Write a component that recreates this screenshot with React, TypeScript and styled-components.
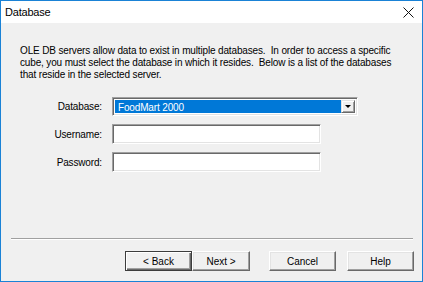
import styled, { createGlobalStyle } from "styled-components";

const GlobalStyle = createGlobalStyle`
  html, body {
    margin: 0;
    padding: 0;
    background: #ffffff;
  }
  * {
    box-sizing: border-box;
  }
`;

const Window = styled.div`
  width: 423px;
  height: 282px;
  border: 1px solid #1a82d6;
  display: flex;
  flex-direction: column;
  font-family: "Liberation Sans", Arial, sans-serif;
  font-size: 10px;
  letter-spacing: -0.15px;
  color: #000;
`;

const TitleBar = styled.div`
  height: 22px;
  flex: none;
  background: #ffffff;
  display: flex;
  align-items: center;
  padding: 0 8px 0 4px;
`;

const Title = styled.span`
  flex: 1;
  font-size: 11px;
  letter-spacing: -0.2px;
  color: #000;
`;

const CloseIcon = styled.svg`
  width: 11px;
  height: 11px;
  display: block;
`;

const Body = styled.div`
  flex: 1;
  background: #f0f0f0;
  display: flex;
  flex-direction: column;
`;

const Intro = styled.p`
  margin: 22px 0 0 19px;
  line-height: 12px;
  white-space: pre;
`;

const Form = styled.div`
  display: grid;
  grid-template-columns: 82px auto;
  grid-template-rows: 19px 20px 20px;
  column-gap: 10px;
  row-gap: 8px;
  margin: 16px 0 0 19px;
  align-items: center;
`;

const Label = styled.label`
  text-align: right;
`;

const sunken = `
  border-style: solid;
  border-width: 1px;
  border-color: #a0a0a0 #ffffff #ffffff #a0a0a0;
  box-shadow: inset 1px 1px #696969, inset -1px -1px #e3e3e3;
`;

const TextBox = styled.div`
  ${sunken}
  width: 209px;
  height: 20px;
  background: #ffffff;
`;

const Select = styled.div`
  ${sunken}
  width: 246px;
  height: 19px;
  background: #ffffff;
  display: flex;
  padding: 2px;
`;

const Selected = styled.div`
  flex: 1;
  background: #0078d7;
  color: #ffffff;
  padding-left: 3px;
  line-height: 15px;
`;

const DropButton = styled.div`
  width: 14px;
  background: #f0f0f0;
  border-style: solid;
  border-width: 1px;
  border-color: #e3e3e3 #696969 #696969 #e3e3e3;
  box-shadow: inset 1px 1px #ffffff, inset -1px -1px #a0a0a0;
  display: flex;
  align-items: center;
  justify-content: center;
`;

const Arrow = styled.span`
  width: 0;
  height: 0;
  border-left: 3px solid transparent;
  border-right: 3px solid transparent;
  border-top: 3px solid #000;
`;

const Separator = styled.div`
  margin: auto 9px 0 10px;
  height: 2px;
  border-top: 1px solid #a0a0a0;
  border-bottom: 1px solid #ffffff;
`;

const ButtonRow = styled.div`
  display: flex;
  justify-content: flex-end;
  padding: 11px 8px 10px 0;
`;

const Button = styled.button<{ $default?: boolean; $w?: number; $gap?: number }>`
  width: ${({ $w }) => $w ?? 67}px;
  height: 20px;
  margin-left: ${({ $gap }) => $gap ?? 0}px;
  padding: 0;
  font: inherit;
  color: #000;
  background: #f0f0f0;
  border-style: solid;
  border-width: 1px;
  border-color: ${({ $default }) =>
    $default ? "#3c3c3c" : "#ffffff #696969 #696969 #ffffff"};
  box-shadow: ${({ $default }) =>
    $default
      ? "inset 1px 1px #ffffff, inset -1px -1px #696969, inset -2px -2px #a0a0a0"
      : "inset -1px -1px #a0a0a0, inset 1px 1px #e3e3e3"};
`;

export default function App() {
  return (
    <>
      <GlobalStyle />
      <Window>
        <TitleBar>
          <Title>Database</Title>
          <CloseIcon viewBox="0 0 11 11">
            <path d="M0.5 0.5 L10.5 10.5 M10.5 0.5 L0.5 10.5" stroke="#111" strokeWidth="1" />
          </CloseIcon>
        </TitleBar>
        <Body>
          <Intro>
            {"OLE DB servers allow data to exist in multiple databases.  In order to access a specific\n" +
              "cube, you must select the database in which it resides.  Below is a list of the databases\n" +
              "that reside in the selected server."}
          </Intro>
          <Form>
            <Label>Database:</Label>
            <Select>
              <Selected>FoodMart 2000</Selected>
              <DropButton>
                <Arrow />
              </DropButton>
            </Select>
            <Label>Username:</Label>
            <TextBox />
            <Label>Password:</Label>
            <TextBox />
          </Form>
          <Separator />
          <ButtonRow>
            <Button $default>&lt; Back</Button>
            <Button $w={58}>Next &gt;</Button>
            <Button $gap={19}>Cancel</Button>
            <Button $gap={11}>Help</Button>
          </ButtonRow>
        </Body>
      </Window>
    </>
  );
}
